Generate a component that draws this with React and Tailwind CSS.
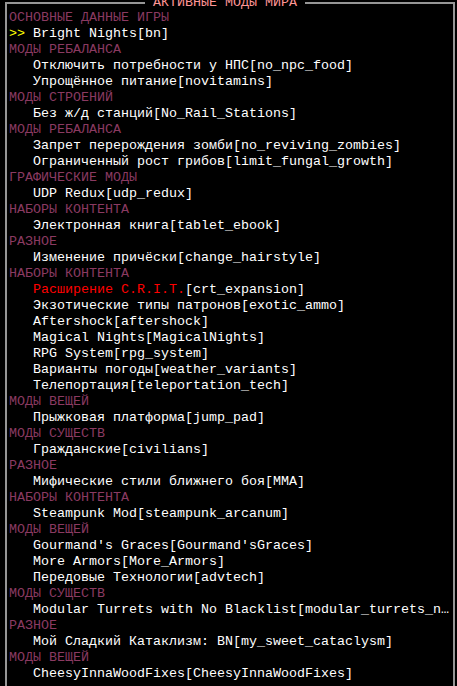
import React from "react";

const rows = [
  ["h", "ОСНОВНЫЕ ДАННЫЕ ИГРЫ"],
  ["sel", "Bright Nights[bn]"],
  ["h", "МОДЫ РЕБАЛАНСА"],
  ["m", "Отключить потребности у НПС[no_npc_food]"],
  ["m", "Упрощённое питание[novitamins]"],
  ["h", "МОДЫ СТРОЕНИЙ"],
  ["m", "Без ж/д станций[No_Rail_Stations]"],
  ["h", "МОДЫ РЕБАЛАНСА"],
  ["m", "Запрет перерождения зомби[no_reviving_zombies]"],
  ["m", "Ограниченный рост грибов[limit_fungal_growth]"],
  ["h", "ГРАФИЧЕСКИЕ МОДЫ"],
  ["m", "UDP Redux[udp_redux]"],
  ["h", "НАБОРЫ КОНТЕНТА"],
  ["m", "Электронная книга[tablet_ebook]"],
  ["h", "РАЗНОЕ"],
  ["m", "Изменение причёски[change_hairstyle]"],
  ["h", "НАБОРЫ КОНТЕНТА"],
  ["red", "Расширение C.R.I.T.", "[crt_expansion]"],
  ["m", "Экзотические типы патронов[exotic_ammo]"],
  ["m", "Aftershock[aftershock]"],
  ["m", "Magical Nights[MagicalNights]"],
  ["m", "RPG System[rpg_system]"],
  ["m", "Варианты погоды[weather_variants]"],
  ["m", "Телепортация[teleportation_tech]"],
  ["h", "МОДЫ ВЕЩЕЙ"],
  ["m", "Прыжковая платформа[jump_pad]"],
  ["h", "МОДЫ СУЩЕСТВ"],
  ["m", "Гражданские[civilians]"],
  ["h", "РАЗНОЕ"],
  ["m", "Мифические стили ближнего боя[MMA]"],
  ["h", "НАБОРЫ КОНТЕНТА"],
  ["m", "Steampunk Mod[steampunk_arcanum]"],
  ["h", "МОДЫ ВЕЩЕЙ"],
  ["m", "Gourmand's Graces[Gourmand'sGraces]"],
  ["m", "More Armors[More_Armors]"],
  ["m", "Передовые Технологии[advtech]"],
  ["h", "МОДЫ СУЩЕСТВ"],
  ["m", "Modular Turrets with No Blacklist[modular_turrets_n…"],
  ["h", "РАЗНОЕ"],
  ["m", "Мой Сладкий Катаклизм: BN[my_sweet_cataclysm]"],
  ["h", "МОДЫ ВЕЩЕЙ"],
  ["m", "CheesyInnaWoodFixes[CheesyInnaWoodFixes]"],
];

function Row({ r }) {
  const [kind, text, extra] = r;
  if (kind === "h") {
    return <div className="h-4 text-[#8b3a62]">{text}</div>;
  }
  if (kind === "sel") {
    return (
      <div className="h-4 flex">
        <span className="w-6 text-[#ffff00]">{">>"}</span>
        <span className="text-white">{text}</span>
      </div>
    );
  }
  if (kind === "red") {
    return (
      <div className="h-4 pl-6">
        <span className="text-[#ff0000]">{text}</span>
        <span className="text-white">{extra}</span>
      </div>
    );
  }
  return <div className="h-4 pl-6 text-white">{text}</div>;
}

export default function App() {
  return (
    <div
      className="w-[457px] h-[686px] bg-black overflow-hidden text-[13.333px] leading-4 whitespace-pre"
      style={{ fontFamily: '"Liberation Mono", "DejaVu Sans Mono", monospace' }}
    >
      <div className="relative ml-[5px] mt-[2px] w-[450px] h-[700px] border-l-2 border-t-2 border-r-2 border-[#969696]">
        <div className="absolute left-[138px] top-[-9px] h-4 px-2 bg-black text-[#ff9696]">
          АКТИВНЫЕ МОДЫ МИРА
        </div>
        <div className="pl-[2px] pt-[6px] flex flex-col">
          {rows.map((r, i) => (
            <Row key={i} r={r} />
          ))}
        </div>
      </div>
    </div>
  );
}
